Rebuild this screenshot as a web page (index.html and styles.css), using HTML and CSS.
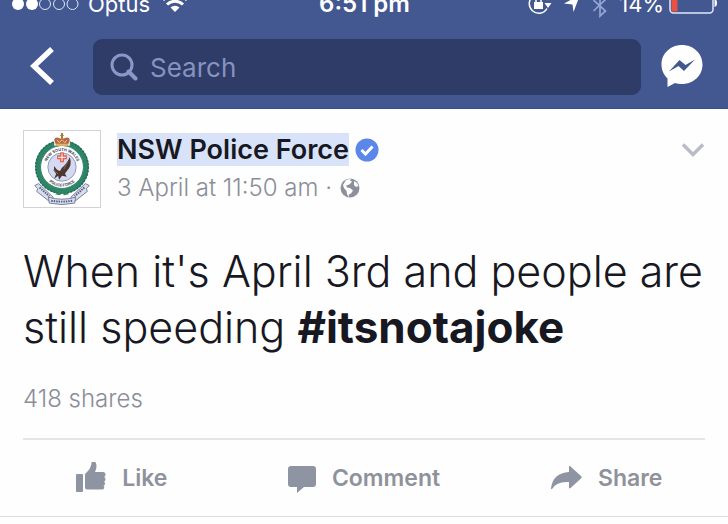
FILE: index.html
```html
<!DOCTYPE html>
<html lang="en">
<head>
    <meta charset="UTF-8">
    <meta name="viewport" content="width=device-width, initial-scale=1">
    <title>NSW Police Force</title>
    <link rel="stylesheet" href="styles.css">
</head>
<body>

    <header class="top">
        <!-- phone status bar -->
        <div class="status">
            <div class="status-left">
                <svg width="68" height="28" viewBox="0 -2 68 28">
                    <g fill="#fff">
                        <circle cx="6" cy="12" r="6"/>
                        <circle cx="20" cy="12" r="6"/>
                    </g>
                    <g fill="none" stroke="#dfe6f7" stroke-width="1">
                        <circle cx="33" cy="12" r="5.500"/>
                        <circle cx="47" cy="12" r="5.500"/>
                        <circle cx="60.500" cy="12" r="5.500"/>
                    </g>
                </svg>
                <span>Optus</span>
                <svg width="26" height="28" viewBox="0 -1 26 28">
                    <g fill="none" stroke="#fff" stroke-width="3">
                        <path d="M1 9a17 17 0 0 1 24 0"/>
                        <path d="M5 13.500a11.500 11.500 0 0 1 16 0"/>
                    </g>
                    <path d="M13 21l-4.500-4.500a6.500 6.500 0 0 1 9 0z" fill="#fff"/>
                </svg>
            </div>
            <span class="clock">6:51 pm</span>
            <div class="status-right">
                <svg width="24" height="28" viewBox="0 -1 24 28">
                    <path d="M19 17.500A9.500 9.500 0 1 1 19.500 9" fill="none" stroke="#fff" stroke-width="1.500"/>
                    <path d="M16.500 12h7l-3.500 5z" fill="#fff"/>
                    <path d="M6 11h9v7H6z" fill="#fff"/>
                    <path d="M8 11V9a2.500 2.500 0 0 1 5 0v2" fill="none" stroke="#fff" stroke-width="1.500"/>
                </svg>
                <svg width="18" height="28" viewBox="0 -1 18 28">
                    <path d="M17 4L1 12.500l8.500 1L10.500 21z" fill="#fff"/>
                </svg>
                <svg width="16" height="28" viewBox="0 -2 16 28">
                    <path d="M1.500 8l12 11L8 24V2l5.500 5.500L1.500 19" fill="none" stroke="#93a5d6" stroke-width="1.700"/>
                </svg>
                <span class="percent">14%</span>
                <svg width="48" height="28" viewBox="0 -2 48 28">
                    <rect x="1" y="0" width="43" height="21" rx="3.500" fill="none" stroke="#dfe8fb" stroke-width="1.500"/>
                    <path d="M2.500 2h6v17.500h-6z" fill="#e8503f"/>
                    <path d="M45.500 7q2.500.500 2.500 4t-2.500 4z" fill="#fff"/>
                </svg>
            </div>
        </div>

        <nav class="toolbar">
            <button class="icon-btn back" aria-label="Back">
                <svg width="24" height="40" viewBox="0 1 24 40">
                    <path d="M22 3L4 20l18 17" fill="none" stroke="#fff" stroke-width="5.500"/>
                </svg>
            </button>
            <label class="search">
                <svg width="28" height="28" viewBox="0 0 28 28" fill="none" stroke="#8a98c9">
                    <circle cx="12" cy="12" r="10" stroke-width="3"/>
                    <path d="M18.500 18.500l7 7" stroke-width="4" stroke-linecap="round"/>
                </svg>
                <input type="text" placeholder="Search" aria-label="Search">
            </label>
            <button class="icon-btn messenger" aria-label="Messenger">
                <svg width="42" height="44" viewBox="0 1 42 44">
                    <path d="M21 1C9.500 1 .500 9.500.500 20.500c0 5.500 2.300 10.500 6 14V43l7.500-4c2.200.800 4.500 1 7 1 11.500 0 20.500-8.500 20.500-19.500S32.500 1 21 1z" fill="#fff"/>
                    <path d="M8 27.500L18.500 16l6 5L34 15.500 23 27l-5.500-5z" fill="#435891"/>
                </svg>
            </button>
        </nav>
    </header>

    <main class="post">
        <div class="post-head">
            <svg class="avatar" viewBox="0 0 78 78" role="img" aria-label="NSW Police Force badge">
                <rect width="78" height="78" fill="#fff"/>
                <!-- wreath -->
                <circle cx="39" cy="37" r="24.500" fill="none" stroke="#2f8468" stroke-width="6"/>
                <circle cx="39" cy="37" r="27" fill="none" stroke="#1f6b54" stroke-width="1.500" stroke-dasharray="2 1.500"/>
                <circle cx="39" cy="37" r="22" fill="none" stroke="#58a189" stroke-width="1" stroke-dasharray="1.500 2"/>
                <path d="M39 59l-7 6 5 1 2-3 2 3 5-1z" fill="#2f8468"/>
                <circle cx="39" cy="37" r="21" fill="#fff"/>
                <circle cx="39" cy="37" r="14.500" fill="#d3daf1" stroke="#8d97bb" stroke-width="1"/>
                <defs>
                    <path id="ring-top" d="M22.500 37a16.500 16.500 0 0 1 33 0"/>
                    <path id="ring-bottom" d="M19 37a20 20 0 0 0 40 0"/>
                </defs>
                <g class="badge-text">
                    <text><textPath href="#ring-top" startOffset="50%">NEW SOUTH WALES</textPath></text>
                    <text><textPath href="#ring-bottom" startOffset="50%">POLICE FORCE</textPath></text>
                </g>
                <!-- crown -->
                <path d="M31 3h16v12H31z" fill="#fff"/>
                <path d="M33 15l-2-6q1-3 4-2l3 1 1-2 1 2 3-1q3-1 4 2l-2 6z" fill="#b5653f"/>
                <path d="M38 2h2v2h1v1h-1v3h-2V5h-1V4h1z" fill="#a97a36"/>
                <path d="M33 13h12v2H33z" fill="#e3b468"/>
                <path d="M34 9l2 3 3-3 3 3 2-3" fill="none" stroke="#edc88a" stroke-width="1"/>
                <!-- cross -->
                <path d="M37 22h4v3h3v4h-3v3h-4v-3h-3v-4h3z" fill="#e0604b"/>
                <path d="M39 23v8M35 27h8" stroke="#fff" stroke-width="1"/>
                <!-- eagle -->
                <path d="M47 27q3 8-3 14l-2 3 2 3-5-1-3 4-1-4-4 3 2-5q-3-3-2-8 3 5 6 5 1-3 4-5 4-4 6-9z" fill="#4b372f"/>
                <path d="M30 40l5 4M45 31l-4 8" stroke="#8a6a50" stroke-width="1"/>
                <!-- scroll -->
                <g fill="#d9ddec" stroke="#747d9e" stroke-width="1">
                    <path d="M15 54l-4 2 3 3-1 3 14 11 3-5z"/>
                    <path d="M63 54l4 2-3 3 1 3-14 11-3-5z"/>
                    <path d="M25 68q14 4 28 0l-1 6q-13 3-26 0z"/>
                </g>
                <path d="M16 58l10 9M62 58l-10 9M28 71.500q11 2 22 0" fill="none" stroke="#525c80" stroke-width="2" stroke-dasharray="1.500 1"/>
            </svg>

            <div class="byline">
                <div class="name-row">
                    <a class="name" href="#">NSW Police Force</a>
                    <svg width="24" height="24" viewBox="0 0 24 24">
                        <circle cx="12" cy="12" r="11.500" fill="#5b86ea"/>
                        <path d="M6.500 12l4 4 7-7.500" fill="none" stroke="#fff" stroke-width="3"/>
                    </svg>
                </div>
                <div class="date-row">
                    <span>3 April at 11:50 am ·</span>
                    <svg width="20" height="20" viewBox="0 0 20 20">
                        <circle cx="10" cy="10" r="9.500" fill="#8d909b"/>
                        <path d="M6 2l5-1.500-1 2 2 1-2 2.500-2 1-2 .500 1 2 3 .500 3 2.500-2 3-2 1-.500 2.500L7 16l-.500-3-2.500-3L3 7z" fill="#fefefe"/>
                        <path d="M14 3l3 2 1.500 3-2.500 1-2-2z" fill="#fefefe"/>
                    </svg>
                </div>
            </div>

            <button class="icon-btn more" aria-label="More options">
                <svg width="24" height="16" viewBox="0 0 24 16">
                    <path d="M2 2.500l10 10 10-10" fill="none" stroke="#b9bcc4" stroke-width="3.500"/>
                </svg>
            </button>
        </div>

        <p class="message">When it's April 3rd and people are still speeding <a href="#">#itsnotajoke</a></p>

        <p class="shares">418 shares</p>
    </main>

    <div class="actions">
        <button class="action">
            <svg width="31" height="32" viewBox="0 1 31 32" fill="#8f94a2">
                <rect x="1" y="13" width="7" height="18" rx="1"/>
                <path d="M10 14q0-2 2-3 4-4 4.500-9Q16.500 0 18.500 0q3 .500 3 5 0 3-1.500 6H28q2.500 0 2.500 2.500 0 2-1.500 2.500 1.500.500 1.500 2.200 0 1.800-1.500 2.300 1 .500 1 2 0 1.700-1.500 2.200 1 .800.700 2.300-.500 1.500-2.200 1.500H12q-2 0-2-2z"/>
            </svg>
            <span>Like</span>
        </button>
        <button class="action">
            <svg width="28" height="32" viewBox="0 0 28 32" fill="#8f94a2">
                <path d="M3 4h22q3 0 3 3v15q0 3-3 3H16l-7 6v-6H3q-3 0-3-3V7q0-3 3-3z"/>
            </svg>
            <span>Comment</span>
        </button>
        <button class="action">
            <svg width="31" height="32" viewBox="0 0 31 32" fill="#8f94a2">
                <path d="M18 5q0-2 1.500-.500L30 14q1.200 1.200 0 2.400L19.500 26Q18 27 18 25.500V20Q6 19 1.500 26.500 0 28 0 26 2 11 18 10z"/>
            </svg>
            <span>Share</span>
        </button>
    </div>

</body>
</html>
```
FILE: styles.css
```css
*{ box-sizing: border-box; }
body,p{ margin: 0; padding: 0; }
body{
    font-family: Inter, "Liberation Sans", sans-serif;
    background: #fefefe;
    color: #171822;
}
svg{ display: block; flex: none; }
button{
    border: 0;
    padding: 0;
    background: none;
    font: inherit;
    color: inherit;
    cursor: pointer;
}
a{ color: inherit; text-decoration: none; }


.top{
    background: #435891;
    border-bottom: 1px solid #3b4e82;
}

/* content is taller than the bar, the top of it is cut off */
.status{
    height: 18px;
    padding: 0 11px 0 12px;
    display: grid;
    grid-template-columns: 1fr auto 1fr;
    align-content: end;
    overflow: hidden;
    color: #fff;
    font-size: 22px;
    line-height: 28px;
}
.status-left,
.status-right{
    display: flex;
    align-items: center;
}
.status-left{ gap: 8px; }
.status-left svg:last-child{ margin-left: 4px; }
.status-right{
    justify-content: flex-end;
    gap: 11px;
}
.percent{ margin-right: -6px; }
.clock{
    font-size: 24px;
    font-weight: 600;
}

.toolbar{
    display: flex;
    align-items: center;
    padding: 21px 25px 13px 30px;
}
.search{
    flex: 1;
    min-width: 0;
    height: 56px;
    margin: 0 20px 0 39px;
    padding: 0 17px;
    display: flex;
    align-items: center;
    gap: 12px;
    background: #2e3c67;
    border-radius: 9px;
}
.search input{
    flex: 1;
    min-width: 0;
    border: 0;
    padding: 0;
    outline: none;
    background: none;
    font: inherit;
    font-size: 26px;
    color: #fff;
}
.search input::placeholder{
    color: #8593c2;
    opacity: 1;
}


.post{
    margin: 0 23px;
    padding-top: 21px;
    border-bottom: 2px solid #e4e5e8;
}
.post-head{
    display: flex;
    align-items: flex-start;
}
.avatar{
    width: 78px;
    height: 78px;
    border: 1px solid #d2d2d4;
}
.badge-text{
    font-size: 4px;
    font-weight: 700;
    fill: #3c3f50;
    text-anchor: middle;
}
.byline{
    flex: 1;
    margin-left: 16px;
    padding-top: 3px;
}
.name-row,
.date-row{
    display: flex;
    align-items: center;
}
.name-row{ gap: 6px; }
.name{
    background: #d8e3fa;
    font-size: 27px;
    line-height: 33px;
    font-weight: 600;
}
.date-row{
    gap: 8px;
    margin-top: 7px;
    font-size: 24px;
    line-height: 30px;
    font-weight: 300;
    color: #8b8d97;
}
.more{ padding-top: 12px; }

.message{
    margin-top: 35px;
    font-size: 43px;
    line-height: 56px;
    font-weight: 300;
}
.message a{
    font-size: 44px;
    font-weight: 700;
}

.shares{
    margin: 30px 0 25px;
    font-size: 24px;
    line-height: 28px;
    font-weight: 300;
    color: #8b8d97;
}


.actions{
    display: grid;
    grid-template-columns: repeat(3, 1fr);
    border-bottom: 1px solid #dcdde0;
}
.action{
    height: 76px;
    display: flex;
    align-items: center;
    justify-content: center;
    gap: 16px;
    font-size: 23px;
    font-weight: 600;
    color: #8f929b;
}
```
